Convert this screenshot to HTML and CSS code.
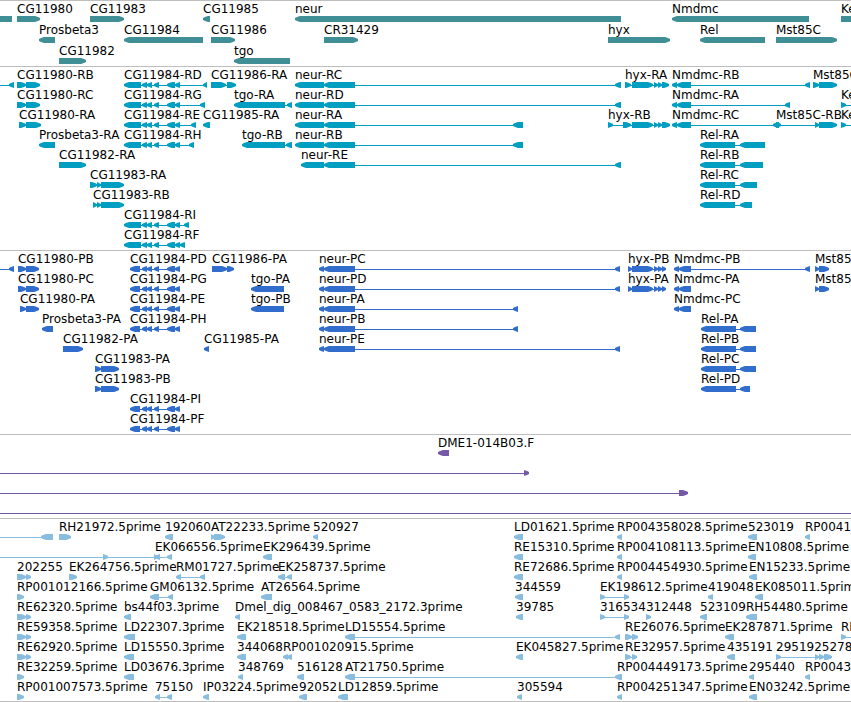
FILE: index.html
```html
<!DOCTYPE html>
<html lang="en">
<head>
    <meta charset="UTF-8">
    <meta name="viewport" content="width=device-width, initial-scale=1.0">
    <title>Genome browser</title>
    <link rel="stylesheet" href="styles.css">
</head>
<body>
    <main id="browser">
        <section class="track genes" id="genes" aria-label="Genes"></section>
        <section class="track transcripts" id="transcripts" aria-label="Transcripts"></section>
        <section class="track proteins" id="proteins" aria-label="Proteins"></section>
        <section class="track clones" id="clones" aria-label="Clones"></section>
        <section class="track ests" id="ests" aria-label="ESTs"></section>
    </main>

    <script src="tracks.js"></script>
</body>
</html>
```

FILE: styles.css
```css
body {
    margin: 0;
    background-color: #fff;
    color: #000;
    font-family: "DejaVu Sans", Verdana, sans-serif;
    font-size: 12px;
    line-height: 14px;
}
#browser {
    border-bottom: 1px solid #bebebe;
}
.track {
    border-top: 1px solid #bebebe;
    padding: 1px 0 2px;
}
.genes,
.ests {
    padding-bottom: 1px;
}
.row {
    position: relative;
    height: 20px;
    overflow: hidden;
}
.genes .row {
    height: 21px;
}
.genes {
    --fill: #408f96;
}
.transcripts {
    --fill: #009ec0;
}
.proteins {
    --fill: #316dcc;
}
.clones {
    --fill: #7558a8;
}
.ests {
    --fill: #88bddf;
}
.label {
    position: absolute;
    top: 0;
    white-space: nowrap;
}
.intron {
    position: absolute;
    top: 17px;
    height: 1px;
    background-color: var(--fill);
}
.exon {
    position: absolute;
    top: 14px;
    height: 6px;
    background-color: var(--fill);
}
/* blunt arrow heads, 5px long whatever the width of the exon */
.forward {
    clip-path: polygon(0 0, max(0px, 100% - 5px) 0, calc(100% - 2px) 1px, 100% 2px, 100% 4px, calc(100% - 2px) 5px, max(0px, 100% - 5px) 100%, 0 100%);
}
.reverse {
    clip-path: polygon(0 2px, 2px 1px, min(100%, 5px) 0, 100% 0, 100% 100%, min(100%, 5px) 100%, 2px 5px, 0 4px);
}
```

FILE: tracks.js
```js
// width of the region in view, all coordinates below are in this unit
const VIEW = 851;
// coordinates for features that run out of view
const LEFT = -30;
const RIGHT = 900;

// exons shared by several transcripts
const cg11984r = [[124, 141], [142, 147], [147, 152], [154, 159], [167, 175], [175, 180]];
const cg11984p = [[130, 140], [142, 147], [147, 152], [154, 159], [167, 175], [175, 180]];
const neurR = [[295, 324], [324, 355]];
const neurP = [[319, 324], [324, 355]];
const hyxR = [[632, 653], [654, 658], [658, 662]];
const hyxP = [[628, 632], [632, 653], [654, 658], [658, 662], [662, 666]];
const nmdmcR = [[672, 677], [677, 691]];
const nmdmcP = [[674, 679], [679, 691]];

// one array per row, each feature is [label, strand, exons]
const tracks = {
    genes: [
        [
            ['', '-', [[LEFT, 12]]],
            ['CG11980', '+', [[17, 40]]],
            ['CG11983', '+', [[90, 124]]],
            ['CG11985', '-', [[203, 210]]],
            ['neur', '-', [[295, 621]]],
            ['Nmdmc', '-', [[672, 809]]],
            ['Ke', '+', [[841, RIGHT]]]
        ],
        [
            ['Prosbeta3', '-', [[39, 55]]],
            ['CG11984', '-', [[124, 203]]],
            ['CG11986', '+', [[211, 235]]],
            ['CR31429', '+', [[324, 358]]],
            ['hyx', '+', [[608, 670]]],
            ['Rel', '-', [[700, 765]]],
            ['Mst85C', '+', [[776, 837]]]
        ],
        [
            ['CG11982', '+', [[59, 86]]],
            ['tgo', '-', [[234, 290]]]
        ]
    ],
    transcripts: [
        [
            ['', '-', [[LEFT, -10], [9, 14]]],
            ['CG11980-RB', '+', [[17, 26], [26, 40]]],
            ['CG11984-RD', '-', [...cg11984r, [203, 207]]],
            ['CG11986-RA', '+', [[211, 226], [227, 236]]],
            ['neur-RC', '-', [...neurR, [615, 621]]],
            ['hyx-RA', '+', [[625, 631], ...hyxR, [662, 669]]],
            ['Nmdmc-RB', '-', [...nmdmcR, [805, 810]]],
            ['Mst85C-RA', '+', [[813, 819], [819, 837]]]
        ],
        [
            ['CG11980-RC', '+', [[17, 26], [26, 40]]],
            ['CG11984-RG', '-', [...cg11984r, [200, 205]]],
            ['tgo-RA', '-', [[234, 285], [287, 292]]],
            ['neur-RD', '-', [...neurR, [615, 621]]],
            ['Nmdmc-RA', '-', [...nmdmcR, [785, 790]]],
            ['Ke', '+', [[841, 846], [870, RIGHT]]]
        ],
        [
            ['CG11980-RA', '+', [[19, 26], [26, 41]]],
            ['CG11984-RE', '-', [...cg11984r, [191, 196]]],
            ['CG11985-RA', '-', [[203, 210]]],
            ['neur-RA', '-', [...neurR, [513, 523]]],
            ['hyx-RB', '+', [[608, 613], [623, 631], ...hyxR, [662, 670]]],
            ['Nmdmc-RC', '-', [...nmdmcR, [773, 779]]],
            ['Mst85C-RB', '+', [[776, 781], [815, 819], [819, 837]]],
            ['Ke', '+', [[841, 846], [870, RIGHT]]]
        ],
        [
            ['Prosbeta3-RA', '-', [[39, 55]]],
            ['CG11984-RH', '-', [...cg11984r, [189, 194]]],
            ['tgo-RB', '-', [[242, 285], [286, 292]]],
            ['neur-RB', '-', [...neurR, [513, 523]]],
            ['Rel-RA', '-', [[700, 735], [740, 765]]]
        ],
        [
            ['CG11982-RA', '+', [[59, 86]]],
            ['neur-RE', '-', [[301, 324], [324, 355], [615, 621]]],
            ['Rel-RB', '-', [[700, 735], [740, 763]]]
        ],
        [
            ['CG11983-RA', '+', [[90, 97], [97, 101], [101, 124]]],
            ['Rel-RC', '-', [[700, 735], [740, 757]]]
        ],
        [
            ['CG11983-RB', '+', [[93, 97], [97, 101], [101, 124]]],
            ['Rel-RD', '-', [[700, 735], [740, 752]]]
        ],
        [
            ['CG11984-RI', '-', [...cg11984r, [184, 189]]]
        ],
        [
            ['CG11984-RF', '-', [...cg11984r, [180, 185]]]
        ]
    ],
    proteins: [
        [
            ['', '-', [[LEFT, -10], [9, 14]]],
            ['CG11980-PB', '+', [[18, 26], [26, 39]]],
            ['CG11984-PD', '-', cg11984p],
            ['CG11986-PA', '+', [[212, 227], [227, 234]]],
            ['neur-PC', '-', [...neurP, [615, 620]]],
            ['hyx-PB', '+', hyxP],
            ['Nmdmc-PB', '-', [...nmdmcP, [805, 810]]],
            ['Mst85C-PB', '+', [[815, 819], [819, 829]]]
        ],
        [
            ['CG11980-PC', '+', [[18, 26], [26, 39]]],
            ['CG11984-PG', '-', cg11984p],
            ['tgo-PA', '-', [[251, 284]]],
            ['neur-PD', '-', [...neurP, [615, 620]]],
            ['hyx-PA', '+', hyxP],
            ['Nmdmc-PA', '-', nmdmcP],
            ['Mst85C-PA', '+', [[815, 819], [819, 829]]]
        ],
        [
            ['CG11980-PA', '+', [[20, 26], [26, 39]]],
            ['CG11984-PE', '-', cg11984p],
            ['tgo-PB', '-', [[251, 284]]],
            ['neur-PA', '-', [...neurP, [513, 518]]],
            ['Nmdmc-PC', '-', nmdmcP]
        ],
        [
            ['Prosbeta3-PA', '-', [[42, 53]]],
            ['CG11984-PH', '-', cg11984p],
            ['neur-PB', '-', [...neurP, [513, 518]]],
            ['Rel-PA', '-', [[701, 736], [740, 756]]]
        ],
        [
            ['CG11982-PA', '+', [[63, 83]]],
            ['CG11985-PA', '-', [[204, 209]]],
            ['neur-PE', '-', [...neurP, [615, 620]]],
            ['Rel-PB', '-', [[701, 736], [740, 756]]]
        ],
        [
            ['CG11983-PA', '+', [[95, 101], [101, 119]]],
            ['Rel-PC', '-', [[701, 736], [740, 756]]]
        ],
        [
            ['CG11983-PB', '+', [[95, 101], [101, 119]]],
            ['Rel-PD', '-', [[701, 736], [740, 750]]]
        ],
        [
            ['CG11984-PI', '-', cg11984p]
        ],
        [
            ['CG11984-PF', '-', cg11984p]
        ]
    ],
    clones: [
        [
            ['DME1-014B03.F', '-', [[438, 449]]]
        ],
        [
            ['', '+', [[LEFT, -10], [524, 529]]]
        ],
        [
            ['', '+', [[LEFT, -10], [679, 688]]]
        ],
        [
            ['', '+', [[LEFT, -10], [890, RIGHT]]]
        ]
    ],
    ests: [
        [
            ['', '-', [[LEFT, -10], [41, 53]]],
            ['RH21972.5prime', '+', [[59, 71]]],
            ['192060', '-', [[165, 173]]],
            ['AT22233.5prime', '+', [[211, 215], [214, 225]]],
            ['520927', '-', [[313, 318]]],
            ['LD01621.5prime', '-', [[514, 523]]],
            ['RP004358028.5prime', '-', [[617, 622]]],
            ['523019', '-', [[748, 757]]],
            ['RP0041', '-', [[805, 810]]]
        ],
        [
            ['', '+', [[LEFT, -10], [103, 108], [154, 158]]],
            ['EK066556.5prime', '-', [[155, 160], [167, 172]]],
            ['EK296439.5prime', '-', [[263, 272]]],
            ['RE15310.5prime', '-', [[514, 523]]],
            ['RP004108113.5prime', '-', [[617, 622]]],
            ['EN10808.5prime', '-', [[748, 756]]]
        ],
        [
            ['202255', '+', [[17, 26], [26, 31]]],
            ['EK264756.5prime', '+', [[69, 77]]],
            ['RM01727.5prime', '-', [[176, 181], [200, 205]]],
            ['EK258737.5prime', '-', [[278, 285], [287, 292]]],
            ['RE72686.5prime', '-', [[514, 523]]],
            ['RP004454930.5prime', '-', [[617, 622]]],
            ['EN15233.5prime', '-', [[749, 757]]]
        ],
        [
            ['RP001012166.5prime', '+', [[17, 24]]],
            ['GM06132.5prime', '-', [[150, 159], [168, 173]]],
            ['AT26564.5prime', '-', [[261, 272]]],
            ['344559', '-', [[515, 523]]],
            ['EK198612.5prime', '+', [[600, 605], [624, 629]]],
            ['419048', '-', [[708, 713]]],
            ['EK085011.5prime', '-', [[755, 763]]]
        ],
        [
            ['RE62320.5prime', '+', [[17, 26], [26, 31]]],
            ['bs44f03.3prime', '-', [[124, 131]]],
            ['Dmel_dig_008467_0583_2172.3prime', '-', [[235, 240]]],
            ['39785', '-', [[516, 523]]],
            ['316534', '+', [[600, 605], [624, 629]]],
            ['312448', '+', [[646, 651]]],
            ['523109', '-', [[700, 707]]],
            ['RH54480.5prime', '-', [[746, 757]]]
        ],
        [
            ['RE59358.5prime', '+', [[17, 26], [26, 31]]],
            ['LD22307.3prime', '-', [[124, 135]]],
            ['EK218518.5prime', '-', [[237, 246]]],
            ['LD15554.5prime', '-', [[345, 355], [615, 620]]],
            ['RE26076.5prime', '+', [[625, 632], [632, 638]]],
            ['EK287871.5prime', '-', [[725, 734]]],
            ['RE', '+', [[841, 846], [870, RIGHT]]]
        ],
        [
            ['RE62920.5prime', '+', [[17, 26], [26, 31]]],
            ['LD15550.3prime', '-', [[124, 134]]],
            ['344068', '-', [[237, 246]]],
            ['RP001020915.5prime', '-', [[283, 288], [287, 292]]],
            ['EK045827.5prime', '-', [[516, 523]]],
            ['RE32957.5prime', '+', [[625, 631], [632, 637]]],
            ['435191', '-', [[727, 735]]],
            ['2951925278', '+', [[776, 781], [815, 819], [819, 824], [824, 832]]]
        ],
        [
            ['RE32259.5prime', '+', [[17, 24]]],
            ['LD03676.3prime', '-', [[124, 134]]],
            ['348769', '-', [[238, 243]]],
            ['516128', '-', [[297, 304]]],
            ['AT21750.5prime', '-', [[345, 355], [615, 622]]],
            ['RP004449173.5prime', '-', [[617, 622]]],
            ['295440', '-', [[749, 754]]],
            ['RP0043', '-', [[805, 810]]]
        ],
        [
            ['RP001007573.5prime', '+', [[17, 24]]],
            ['75150', '-', [[155, 160], [167, 172]]],
            ['IP03224.5prime', '-', [[203, 209]]],
            ['92052', '-', [[299, 307]]],
            ['LD12859.5prime', '-', [[338, 348]]],
            ['305594', '-', [[517, 522]]],
            ['RP004251347.5prime', '-', [[617, 622]]],
            ['EN03242.5prime', '-', [[749, 757]]]
        ]
    ]
};

function percent(value) {
    return (value / VIEW * 100) + '%';
}

function addBar(row, className, start, end) {
    const bar = document.createElement('div');
    bar.className = className;
    bar.style.left = percent(start);
    bar.style.width = percent(end - start);
    row.appendChild(bar);
}

function addFeature(row, [name, strand, exons]) {
    const start = exons[0][0];
    const end = exons[exons.length - 1][1];

    if (exons.length > 1) {
        addBar(row, 'intron', start, end);
    }
    for (const exon of exons) {
        addBar(row, strand === '+' ? 'exon forward' : 'exon reverse', exon[0], exon[1]);
    }
    if (name) {
        const label = document.createElement('span');
        label.className = 'label';
        label.textContent = name;
        label.style.left = percent(start);
        row.appendChild(label);
    }
}

for (const id in tracks) {
    const track = document.getElementById(id);
    for (const features of tracks[id]) {
        const row = document.createElement('div');
        row.className = 'row';
        features.forEach(feature => addFeature(row, feature));
        track.appendChild(row);
    }
}
```
